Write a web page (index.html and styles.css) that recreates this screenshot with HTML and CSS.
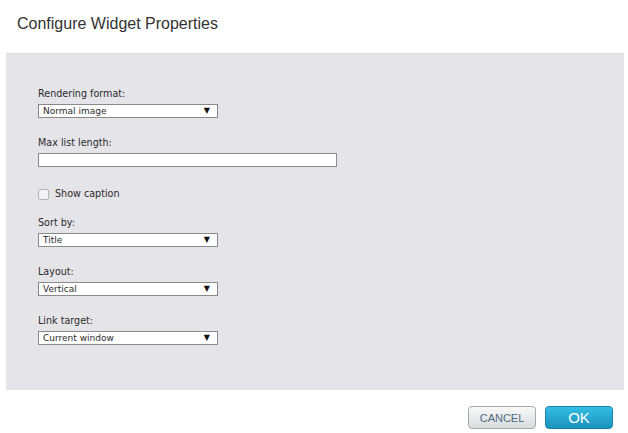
FILE: index.html
```html
<!DOCTYPE html>
<html lang="en">
<head>
  <meta charset="UTF-8" />
  <title>Configure Widget Properties</title>
  <link rel="stylesheet" href="styles.css">
</head>
<body>
  <div class="dialog">
    <h1 class="dialog-title">Configure Widget Properties</h1>

    <div class="panel">
      <div class="field">
        <label>Rendering format:</label>
        <div class="select"><span>Normal image</span><span class="arrow">&#9660;</span></div>
      </div>

      <div class="field">
        <label>Max list length:</label>
        <div class="text-input"></div>
      </div>

      <div class="check-row">
        <span class="checkbox"></span>
        <span>Show caption</span>
      </div>

      <div class="field">
        <label>Sort by:</label>
        <div class="select"><span>Title</span><span class="arrow">&#9660;</span></div>
      </div>

      <div class="field">
        <label>Layout:</label>
        <div class="select"><span>Vertical</span><span class="arrow">&#9660;</span></div>
      </div>

      <div class="field">
        <label>Link target:</label>
        <div class="select"><span>Current window</span><span class="arrow">&#9660;</span></div>
      </div>
    </div>

    <!-- Footer buttons -->
    <div class="actions">
      <button class="btn btn-cancel">CANCEL</button>
      <button class="btn btn-ok">OK</button>
    </div>
  </div>
</body>
</html>
```

FILE: styles.css
```css
:root {
  --panel-bg: #e5e4e9;
  --text: #2b2b2b;
  --field-border: #8a8a8a;
}

body {
  margin: 0;
  background: #ffffff;
  font-family: 'DejaVu Sans', Verdana, sans-serif;
  color: var(--text);
}

.dialog {
  width: 628px;
  height: 433px;
}

.dialog-title {
  margin: 0;
  padding: 15px 0 0 17px;
  height: 40px;
  box-sizing: border-box;
  font-family: 'Liberation Sans', Arial, sans-serif;
  font-weight: normal;
  font-size: 16px;
  color: #333333;
}

.panel {
  margin: 13px 4px 0 6px;
  height: 337px;
  box-sizing: border-box;
  background: var(--panel-bg);
  border-top: 1px solid #dcdce0;
  padding: 34px 0 0 32px;
  font-size: 9.6px;
}

.field {
  margin-bottom: 19px;
}

.field label {
  display: block;
  margin-bottom: 5px;
  line-height: 11px;
}

.select {
  width: 180px;
  height: 14px;
  box-sizing: border-box;
  background: #ffffff;
  border: 1px solid var(--field-border);
  display: flex;
  justify-content: space-between;
  align-items: center;
  padding: 0 7px 0 4px;
  line-height: 12px;
  font-size: 9px;
}

.select .arrow {
  font-size: 8px;
  color: #111111;
}

.text-input {
  width: 299px;
  height: 14px;
  box-sizing: border-box;
  background: #ffffff;
  border: 1px solid var(--field-border);
}

.check-row {
  display: flex;
  align-items: center;
  gap: 6px;
  height: 12px;
  margin: 21px 0 17px;
  line-height: 12px;
}

.checkbox {
  width: 9px;
  height: 9px;
  border: 1px solid #b5b5b8;
  border-radius: 2px;
  background: #f3f3f5;
}

.actions {
  display: flex;
  justify-content: flex-end;
  gap: 9px;
  padding: 16px 15px 0 0;
}

.btn {
  width: 68px;
  height: 23px;
  border-radius: 4px;
  font-family: 'Liberation Sans', Arial, sans-serif;
  cursor: pointer;
  padding: 0;
}

.btn-cancel {
  background: linear-gradient(#f9f9f9, #d9dbdd);
  border: 1px solid #a4a8ab;
  color: #4b6a80;
  font-size: 11px;
}

.btn-ok {
  background: linear-gradient(#35bde3, #1a93bd);
  border: 1px solid #1684ab;
  color: #ffffff;
  font-size: 15px;
}
```
